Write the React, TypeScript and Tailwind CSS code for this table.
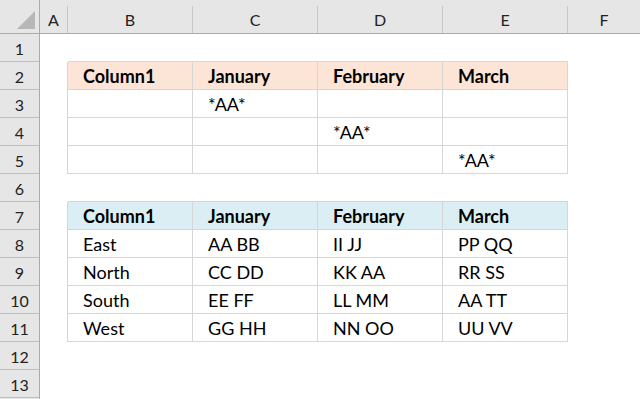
import React from 'react';

const colLetters = ['A', 'B', 'C', 'D', 'E', 'F'];

// sheet content, keyed by row number; index 0 = column B
const sheet: Record<number, string[]> = {
  2: ['Column1', 'January', 'February', 'March'],
  3: ['', '*AA*', '', ''],
  4: ['', '', '*AA*', ''],
  5: ['', '', '', '*AA*'],
  7: ['Column1', 'January', 'February', 'March'],
  8: ['East', 'AA BB', 'II JJ', 'PP QQ'],
  9: ['North', 'CC DD', 'KK AA', 'RR SS'],
  10: ['South', 'EE FF', 'LL MM', 'AA TT'],
  11: ['West', 'GG HH', 'NN OO', 'UU VV'],
};

const inTable = (r: number, c: number) =>
  c >= 1 && c <= 4 && ((r >= 2 && r <= 5) || (r >= 7 && r <= 11));

const rows = Array.from({ length: 14 }, (_, i) => i + 1);

function Cell({ r, c }: { r: number; c: number }) {
  const hasR = inTable(r, c) || inTable(r, c + 1);
  const hasB = inTable(r, c) || inTable(r + 1, c);
  const text = inTable(r, c) ? sheet[r]?.[c - 1] ?? '' : '';
  const bg = inTable(r, c) && r === 2 ? 'bg-[#fce4d6]' : inTable(r, c) && r === 7 ? 'bg-[#daeef3]' : 'bg-white';
  const bold = r === 2 || r === 7;

  return (
    <div
      className={`${bg} ${hasR ? 'border-r border-[#d6d6d6]' : ''} ${hasB ? 'border-b border-[#d6d6d6]' : ''} pl-[15px] pt-[1px] text-[18px] leading-[27px] text-black whitespace-nowrap overflow-hidden ${bold ? 'font-bold' : ''}`}
    >
      {text}
    </div>
  );
}

export default function App() {
  return (
    <div
      className="h-[399px] w-[640px] overflow-hidden bg-white"
      style={{ fontFamily: 'Lato, "Noto Sans", sans-serif' }}
    >
      <div className="grid grid-cols-[40px_28px_125px_125px_125px_125px_1fr] grid-rows-[34px_repeat(14,28px)]">
        {/* corner */}
        <div className="bg-[#e6e6e6] border-r border-b border-[#ababab] flex items-end justify-end pr-[3px] pb-[3px]">
          <svg width="20" height="20" viewBox="0 0 20 20">
            <polygon points="19,1 19,19 1,19" fill="#b7b7b7" />
          </svg>
        </div>

        {/* column headers */}
        {colLetters.map(l => (
          <div key={l} className="bg-[#e6e6e6] border-b border-[#ababab] flex">
            <div className="flex-1 text-center text-[16px] leading-[27px] pt-[6px] text-[#222]">{l}</div>
            {l !== 'F' && <div className="w-px mt-[6px] bg-[#c6c6c6]" />}
          </div>
        ))}

        {rows.map(r => (
          <React.Fragment key={r}>
            <div className="bg-[#e6e6e6] border-r border-b border-r-[#ababab] border-b-[#bfbfbf] text-center text-[16px] leading-[27px] pt-px text-[#222]">
              {r < 14 ? r : ''}
            </div>
            {colLetters.map((_, c) => (
              <Cell key={c} r={r} c={c} />
            ))}
          </React.Fragment>
        ))}
      </div>
    </div>
  );
}
